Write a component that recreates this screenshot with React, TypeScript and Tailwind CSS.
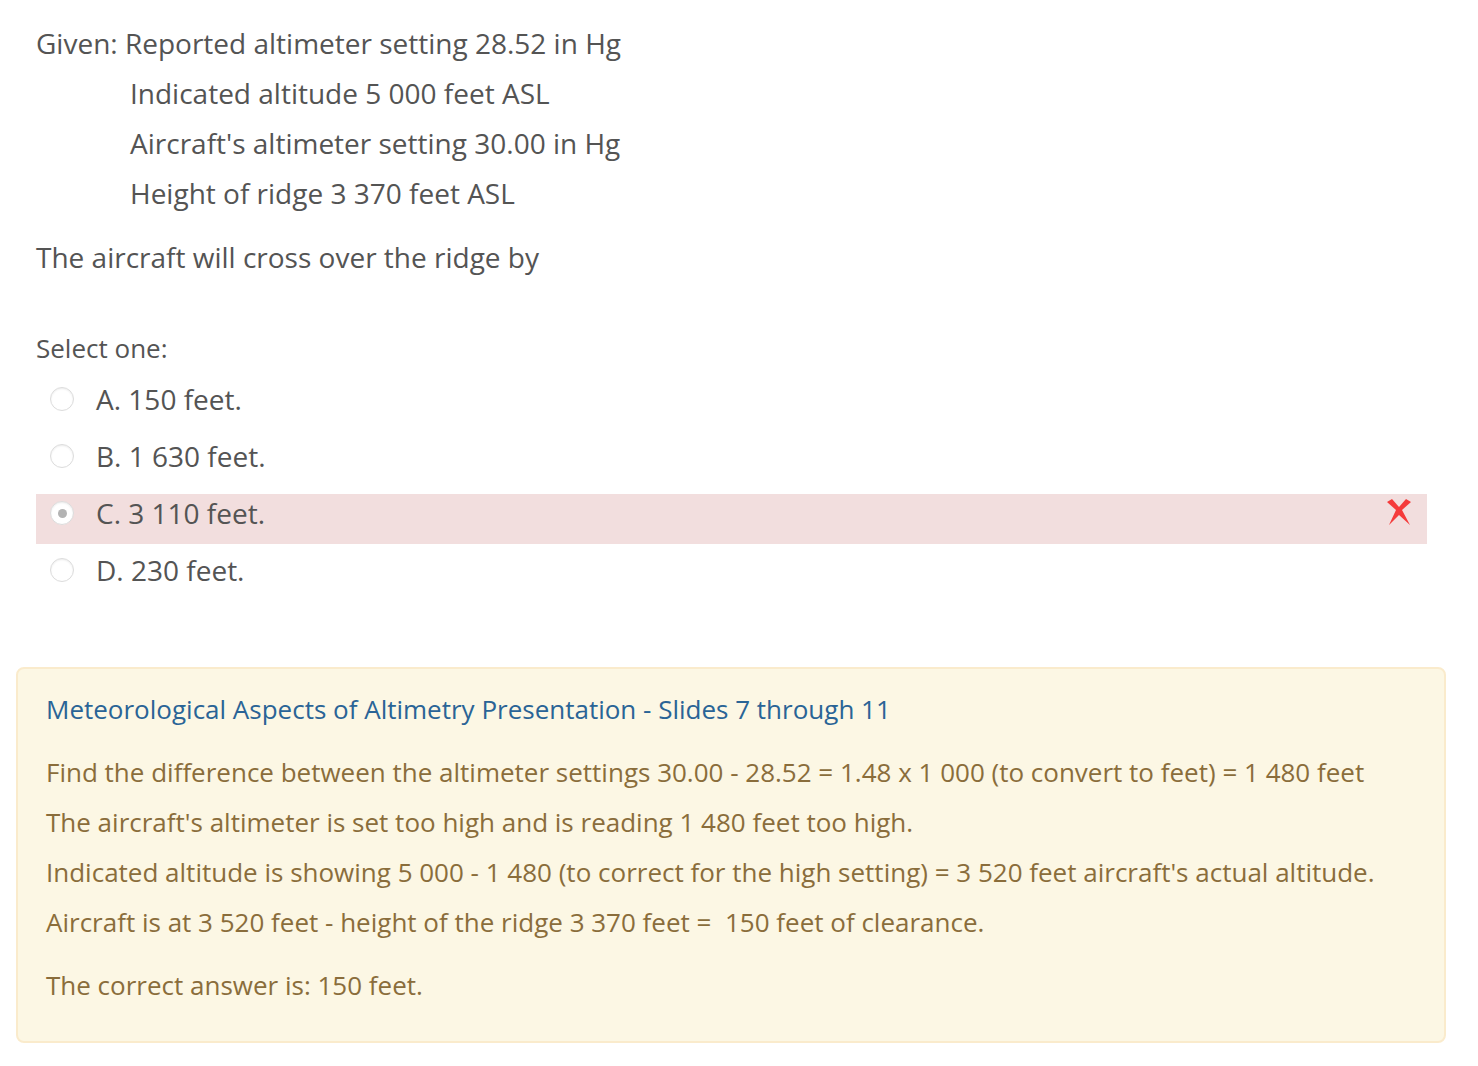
import * as React from "react";

const options = [
  { key: "A", text: "150 feet.", checked: false },
  { key: "B", text: "1 630 feet.", checked: false },
  { key: "C", text: "3 110 feet.", checked: true },
  { key: "D", text: "230 feet.", checked: false },
];

function Radio({ checked }: { checked: boolean }) {
  return (
    <span className="flex h-[24px] w-[24px] items-center justify-center rounded-full border border-[#dcdcdc] bg-white shadow-[inset_0_1px_2px_rgba(0,0,0,0.08)]">
      {checked && <span className="h-[9px] w-[9px] rounded-full bg-[#b3b3b3]" />}
    </span>
  );
}

function WrongMark() {
  return (
    <svg width="28" height="28" viewBox="0 0 28 28" className="text-[#f53b3b]">
      <path
        d="M2 4 L7 1 L14 9 L21 1 L26 4 L17 12 L25 27 L14 17 L4 27 L11 12 Z"
        fill="currentColor"
      />
    </svg>
  );
}

export default function App() {
  return (
    <div className="min-h-screen bg-white font-['Open_Sans',sans-serif] text-[#545454]">
      <div className="pl-[36px] pr-[51px] pt-[18px]">
        <div className="text-[28px] leading-[50px]">
          <div>Given: Reported altimeter setting 28.52 in Hg</div>
          <div className="pl-[94px]">Indicated altitude 5 000 feet ASL</div>
          <div className="pl-[94px]">Aircraft's altimeter setting 30.00 in Hg</div>
          <div className="pl-[94px]">Height of ridge 3 370 feet ASL</div>
          <div className="mt-[14px]">The aircraft will cross over the ridge by</div>
        </div>

        <div className="mt-[41px] text-[26px] leading-[50px]">Select one:</div>

        <div className="mt-[7px] flex flex-col gap-[7px]">
          {options.map((o) => (
            <div
              key={o.key}
              className={
                o.checked
                  ? "flex h-[50px] items-center bg-[#f2dede] pr-[14px]"
                  : "flex h-[50px] items-center pr-[14px]"
              }
            >
              <span className="ml-[14px] mb-[12px]">
                <Radio checked={o.checked} />
              </span>
              <span className="ml-[22px] mb-[12px] text-[28px]">
                {o.key}. {o.text}
              </span>
              {o.checked && (
                <span className="ml-auto mb-[14px]">
                  <WrongMark />
                </span>
              )}
            </div>
          ))}
        </div>
      </div>

      <div className="ml-[16px] mr-[32px] mt-[66px] rounded-[8px] border-2 border-[#faebcc] bg-[#fcf7e4] px-[28px] pt-[15px] pb-[31px] text-[26px] leading-[50px] text-[#8a6d3b]">
        <div className="text-[#2a6496]">
          Meteorological Aspects of Altimetry Presentation - Slides 7 through 11
        </div>
        <div className="mt-[13px]">
          <div>
            Find the difference between the altimeter settings 30.00 - 28.52 = 1.48 x 1 000 (to convert to feet) = 1 480 feet
          </div>
          <div>The aircraft's altimeter is set too high and is reading 1 480 feet too high.</div>
          <div>
            Indicated altitude is showing 5 000 - 1 480 (to correct for the high setting) = 3 520 feet aircraft's actual altitude.
          </div>
          <div>Aircraft is at 3 520 feet - height of the ridge 3 370 feet =&nbsp; 150 feet of clearance.</div>
        </div>
        <div className="mt-[13px]">The correct answer is: 150 feet.</div>
      </div>
    </div>
  );
}
